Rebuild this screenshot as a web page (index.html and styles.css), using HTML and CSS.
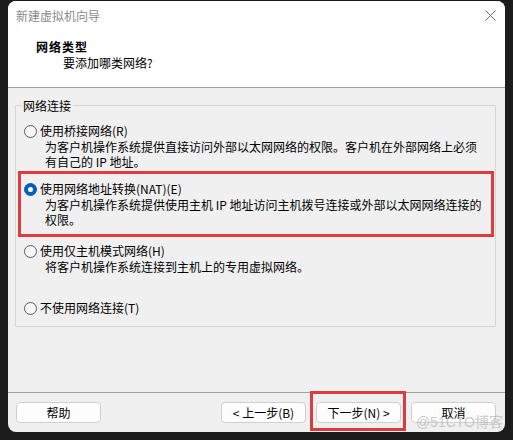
FILE: index.html
```html
<!DOCTYPE html>
<html lang="zh-CN">
<head>
<meta charset="utf-8">
<title>新建虚拟机向导</title>
<link rel="stylesheet" href="styles.css">
</head>
<body>
<div class="window">
  <div class="titlebar">
    <span class="title">新建虚拟机向导</span>
    <svg class="close" width="11" height="11" viewBox="0 0 11 11"><path d="M0.5 0.5 L10.5 10.5 M10.5 0.5 L0.5 10.5" stroke="#6a6a6a" stroke-width="1" fill="none"/></svg>
  </div>
  <div class="header">
    <div class="h-title">网络类型</div>
    <div class="h-sub">要添加哪类网络?</div>
  </div>
  <div class="body">
    <fieldset class="group">
      <legend>网络连接</legend>
      <div class="option opt1">
        <div class="row"><span class="radio"></span><span>使用桥接网络(R)</span></div>
        <div class="desc"><div class="line">为客户机操作系统提供直接访问外部以太网网络的权限。客户机在外部网络上必须</div><div class="line">有自己的 IP 地址。</div></div>
      </div>
      <div class="option opt2 marked">
        <div class="row"><span class="radio checked"></span><span>使用网络地址转换(NAT)(E)</span></div>
        <div class="desc"><div class="line">为客户机操作系统提供使用主机 IP 地址访问主机拨号连接或外部以太网网络连接的</div><div class="line">权限。</div></div>
      </div>
      <div class="option opt3">
        <div class="row"><span class="radio"></span><span>使用仅主机模式网络(H)</span></div>
        <div class="desc"><div class="line">将客户机操作系统连接到主机上的专用虚拟网络。</div></div>
      </div>
      <div class="option opt4">
        <div class="row"><span class="radio"></span><span>不使用网络连接(T)</span></div>
      </div>
    </fieldset>
  </div>
  <div class="footer">
    <button class="btn">帮助</button>
    <div class="nav">
      <button class="btn">&lt; 上一步(B)</button>
      <span class="marked-btn"><button class="btn">下一步(N) &gt;</button></span>
      <button class="btn">取消</button>
    </div>
  </div>
  <div class="watermark">@51CTO博客</div>
</div>
</body>
</html>
```

FILE: styles.css
```css
html, body {
  margin: 0;
  padding: 0;
}
body {
  background: #1c1c1c;
  width: 513px;
  height: 440px;
  overflow: hidden;
  font-family: "Noto Sans CJK SC", "Noto Sans", sans-serif;
  font-size: 12px;
  color: #000;
}
.window {
  position: relative;
  margin: 1px 0 0 8px;
  width: 497px;
  height: 431px;
  background: #f0f0f0;
  border-radius: 8px;
  overflow: hidden;
  display: flex;
  flex-direction: column;
}
.titlebar {
  height: 29px;
  background: #fff;
  display: flex;
  align-items: center;
  justify-content: space-between;
  padding: 0 9px 0 8px;
  flex: none;
}
.title {
  color: #8a8a8a;
  font-size: 12px;
  line-height: 15px;
}
.close {
  display: block;
  margin-top: -1px;
}
.header {
  height: 48px;
  background: #fff;
  border-bottom: 1px solid #a0a0a0;
  padding: 9px 0 0 28px;
  box-sizing: content-box;
  flex: none;
}
.h-title {
  font-weight: bold;
  font-size: 12px;
  letter-spacing: 1px;
  line-height: 16px;
}
.h-sub {
  padding-left: 27px;
  line-height: 16px;
}
.body {
  flex: 1;
  padding-top: 10px;
}
.group {
  margin: 0 9px 0 7px;
  padding: 0 0 10px 0;
  border: 1px solid #d6d6d6;
  min-width: 0;
}
.group legend {
  margin-left: 5px;
  padding: 0 2px;
  line-height: 15px;
}
.option {
  padding-left: 8px;
}
.opt1 { margin-top: 10px; }
.opt2 { margin-top: 12px; }
.opt3 { margin-top: 16px; }
.opt4 { margin-top: 26px; }
.row {
  display: flex;
  align-items: center;
  height: 16px;
  line-height: 16px;
  white-space: nowrap;
}
.radio {
  width: 13px;
  height: 13px;
  box-sizing: border-box;
  border: 1px solid #5c5c5c;
  border-radius: 50%;
  background: #f7f7f7;
  margin-right: 3px;
  flex: none;
  position: relative;
}
.radio.checked {
  background: #005fb8;
  border-color: #005fb8;
}
.radio.checked::after {
  content: "";
  position: absolute;
  left: 3px;
  top: 3px;
  width: 5px;
  height: 5px;
  border-radius: 50%;
  background: #fff;
}
.desc {
  padding-left: 21px;
  white-space: nowrap;
}
.line {
  height: 15px;
  line-height: 15px;
}
.marked {
  position: relative;
}
.marked::before {
  content: "";
  position: absolute;
  left: 2px;
  right: 1px;
  top: -10px;
  bottom: -10px;
  border: 3px solid #e0393e;
  pointer-events: none;
}
.footer {
  flex: none;
  height: 30px;
  border-top: 1px solid #a0a0a0;
  display: flex;
  align-items: flex-start;
  justify-content: space-between;
  padding: 9px 9px 0 8px;
  box-sizing: content-box;
}
.nav {
  display: flex;
  gap: 10px;
}
.btn {
  width: 85px;
  height: 21px;
  margin: 0;
  padding: 0;
  background: #fdfdfd;
  border: 1px solid #cfcfcf;
  border-radius: 4px;
  font-family: "Noto Sans CJK SC", "Noto Sans", sans-serif;
  font-size: 12px;
  line-height: 19px;
  color: #000;
}
.marked-btn {
  position: relative;
  display: block;
}
.marked-btn::after {
  content: "";
  position: absolute;
  left: -6px;
  right: -5px;
  top: -11px;
  bottom: -8px;
  border: 3px solid #e0393e;
  pointer-events: none;
}
.watermark {
  position: absolute;
  right: 2px;
  bottom: 2px;
  font-family: "Liberation Sans", "Noto Sans CJK SC", sans-serif;
  font-size: 14px;
  line-height: 16px;
  color: rgba(170, 170, 170, 0.6);
}
```
